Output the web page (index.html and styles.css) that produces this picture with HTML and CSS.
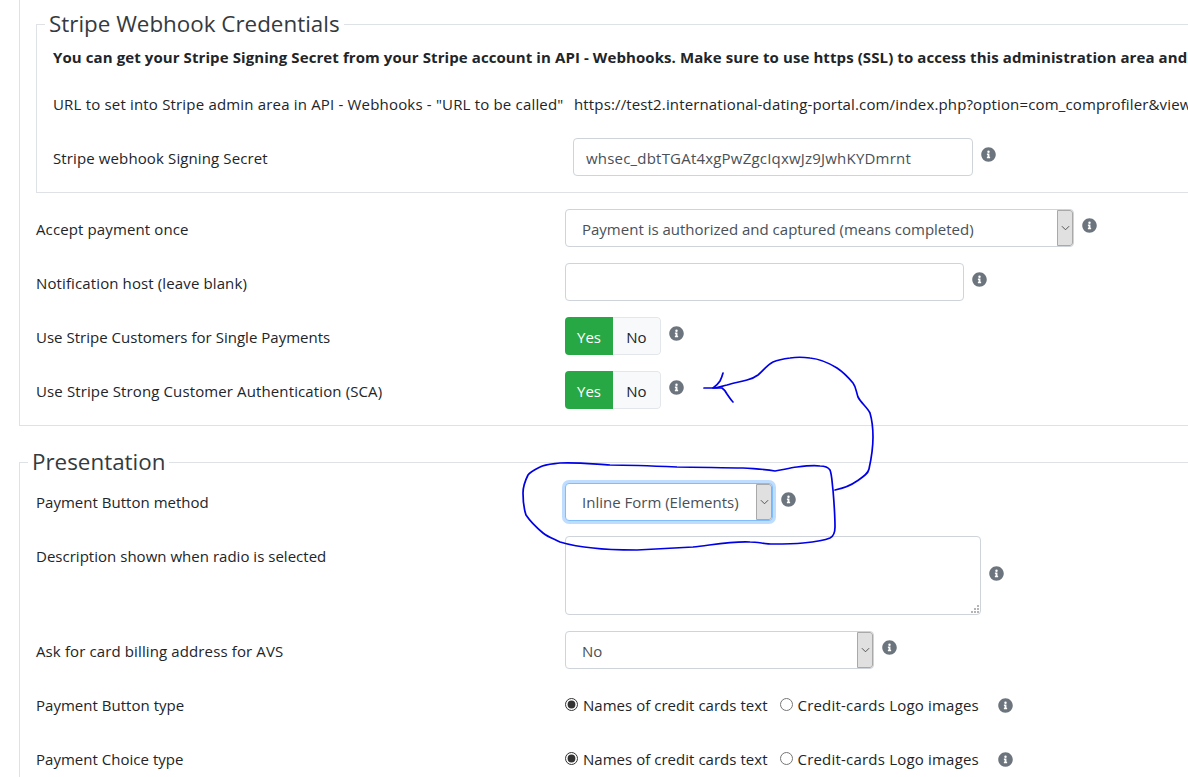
FILE: index.html
```html
<!DOCTYPE html>
<html lang="en">
<head>
<meta charset="utf-8">
<title>Stripe settings</title>
<link rel="stylesheet" href="styles.css">
</head>
<body>
<svg width="0" height="0" class="defs"><defs>
<symbol id="info" viewBox="0 0 512 512"><path d="M256 8C119 8 8 119 8 256s111 248 248 248 248-111 248-248S393 8 256 8zm0 110a42 42 0 1 1 0 84 42 42 0 0 1 0-84zm56 254c0 7-5 12-12 12h-88c-7 0-12-5-12-12v-24c0-7 5-12 12-12h12v-64h-12c-7 0-12-5-12-12v-24c0-7 5-12 12-12h64c7 0 12 5 12 12v100h12c7 0 12 5 12 12z"/></symbol>
<symbol id="chev" viewBox="0 0 10 6"><path d="M1 1l4 4 4-4" fill="none" stroke="#444" stroke-width="1"/></symbol>
</defs></svg>
<main class="page">
  <section class="outer first">
    <fieldset class="box inner">
      <legend>Stripe Webhook Credentials</legend>
      <p class="line bold">You can get your Stripe Signing Secret from your Stripe account in API - Webhooks. Make sure to use https (SSL) to access this administration area and</p>
      <p class="line url"><span class="urllabel">URL to set into Stripe admin area in API - Webhooks - "URL to be called"</span><span class="urlvalue">https://test2.international-dating-portal.com/index.php?option=com_comprofiler&amp;view=pluginclass</span></p>
      <div class="row inrow">
        <label class="lab lab-in wide">Stripe webhook Signing Secret</label>
        <input class="field w400 wide2" type="text" value="whsec_dbtTGAt4xgPwZgcIqxwJz9JwhKYDmrnt">
        <svg class="i"><use href="#info"/></svg>
      </div>
    </fieldset>
    <div class="row">
      <label class="lab wide">Accept payment once</label>
      <div class="sel w509"><span>Payment is authorized and captured (means completed)</span><b class="arr"><svg class="chev"><use href="#chev"/></svg></b></div>
      <svg class="i"><use href="#info"/></svg>
    </div>
    <div class="row">
      <label class="lab wide">Notification host (leave blank)</label>
      <input class="field w399" type="text">
      <svg class="i"><use href="#info"/></svg>
    </div>
    <div class="row">
      <label class="lab">Use Stripe Customers for Single Payments</label>
      <div class="tog"><span class="yes">Yes</span><span class="no">No</span></div>
      <svg class="i"><use href="#info"/></svg>
    </div>
    <div class="row">
      <label class="lab wide">Use Stripe Strong Customer Authentication (SCA)</label>
      <div class="tog"><span class="yes">Yes</span><span class="no">No</span></div>
      <svg class="i"><use href="#info"/></svg>
    </div>
  </section>
  <fieldset class="box outer second">
    <legend>Presentation</legend>
    <div class="row">
      <label class="lab flat">Payment Button method</label>
      <div class="sel w208 focus"><span>Inline Form (Elements)</span><b class="arr"><svg class="chev"><use href="#chev"/></svg></b></div>
      <svg class="i"><use href="#info"/></svg>
    </div>
    <div class="row tall">
      <label class="lab flat">Description shown when radio is selected</label>
      <div class="areawrap">
        <textarea class="area"></textarea>
        <svg class="grip" width="9" height="9" viewBox="0 0 9 9"><path d="M7 1h2v2H7zM4 4h2v2H4zM7 4h2v2H7zM1 7h2v2H1zM4 7h2v2H4zM7 7h2v2H7z"/></svg>
      </div>
      <svg class="i iarea"><use href="#info"/></svg>
    </div>
    <div class="row">
      <label class="lab wide">Ask for card billing address for AVS</label>
      <div class="sel w308"><span>No</span><b class="arr"><svg class="chev"><use href="#chev"/></svg></b></div>
      <svg class="i"><use href="#info"/></svg>
    </div>
    <div class="row">
      <label class="lab">Payment Button type</label>
      <div class="radios">
        <label class="opt"><input type="radio" name="bt" checked>Names of credit cards text</label>
        <label class="opt opt2"><input type="radio" name="bt">Credit-cards Logo images</label>
      </div>
      <svg class="i ir"><use href="#info"/></svg>
    </div>
    <div class="row">
      <label class="lab">Payment Choice type</label>
      <div class="radios">
        <label class="opt"><input type="radio" name="ct" checked>Names of credit cards text</label>
        <label class="opt opt2"><input type="radio" name="ct">Credit-cards Logo images</label>
      </div>
      <svg class="i ir"><use href="#info"/></svg>
    </div>
  </fieldset>
</main>
<svg class="ink" width="1188" height="777" viewBox="0 0 1188 777">
  <path d="M835 490C845 488 850 486 857 481C863 477 868 474 869 469C871 460 873 450 873 437C873 428 872 420 870 413C867 407 861 403 858 397C856 391 856 387 853 383C848 377 843 372 837 368C829 363 820 359 810 358C803 357 796 357 790 358C783 359 778 360 773 362C767 365 763 371 758 375C754 378 751 379 747 380C740 382 733 383 727 385C722 386 718 388 713 388L704 388"/>
  <path d="M723 373C722 377 721 379 720 381C718 384 716 386 713 388C717 388 720 388 722 388C725 390 726 392 727 394C729 397 731 400 733 402"/>
  <path d="M775 471C765 469 755 469 743 468C722 468 700 467 677 467C655 466 632 465 610 465C593 464 575 462 560 463C552 464 545 464 540 467C534 470 530 472 528 475C525 481 523 487 523 493C523 501 524 509 526 515C530 521 537 528 543 533C548 537 554 539 560 542C570 545 581 547 593 548C608 550 622 550 637 550C656 549 674 548 693 547C712 545 732 541 750 542C758 542 765 544 773 544C783 544 793 544 803 543C813 542 823 541 830 538C834 536 835 531 835 527C835 515 834 502 833 490C832 483 832 475 830 470C828 467 824 466 820 466C813 465 805 466 797 467C789 468 782 470 775 471"/>
</svg>
</body>
</html>
```
FILE: styles.css
```css
* { box-sizing: border-box; }
html, body { margin: 0; padding: 0; height: 777px; overflow: hidden; background: #fff; }
body {
  position: relative;
  width: 1188px;
  font-family: "Open Sans", "Noto Sans", "Liberation Sans", sans-serif;
  font-size: 15px;
  color: #212529;
}
.defs { position: absolute; }
.page { width: 1600px; padding-left: 19px; }

.box { border: 1px solid #dee2e6; margin: 0; min-width: 0; }
.box > legend {
  width: auto;
  font-size: 22.4px;
  line-height: 28px;
  padding: 0 4px;
  margin-left: -8px;
  color: #343a40;
  font-weight: 400;
}

.outer.first {
  height: 427px;
  margin-top: -1px;
  padding: 11px 0 0 16px;
  border-left: 1px solid #dee2e6;
  border-bottom: 1px solid #dee2e6;
}
.inner { padding: 0 16px 15px; height: 183px; margin-bottom: 16px; }
.second { margin-top: 22px; padding: 0 0 0 16px; }

.line { margin: 0; height: 20px; line-height: 20px; white-space: nowrap; }
.bold { font-weight: 700; margin-top: 9px; letter-spacing: .09px; }
.url { margin-top: 27px; }
.urllabel { display: inline-block; width: 521px; letter-spacing: .18px; }
.urlvalue { letter-spacing: .14px; }

.row { display: flex; align-items: flex-start; height: 38px; margin-bottom: 16px; }
.inrow { margin: 24px 0 0; }
.tall { height: 79px; margin-bottom: 15px; }
.lab { width: 529px; flex: none; padding-top: 1px; line-height: 38px; white-space: nowrap; letter-spacing: .02px; }
.flat { padding-top: 0; }
.wide { letter-spacing: .12px; }
.lab-in { width: 520px; }
.second .row:first-of-type { margin-top: 7px; }

.field, .sel, .area {
  height: 38px;
  border: 1px solid #ced4da;
  border-radius: 4px;
  background: #fff;
  font: inherit;
  color: #495057;
  flex: none;
}
.field { padding: 2px 12px 0; }
.wide2 { letter-spacing: .2px; }
.w400 { width: 400px; }
.w399 { width: 399px; }
.w509 { width: 509px; }
.w208 { width: 208px; }
.w308 { width: 309px; }
.areawrap { position: relative; flex: none; width: 416px; height: 79px; margin-top: -1px; }
.area { width: 100%; height: 100%; display: block; margin: 0; padding: 6px 12px; resize: none; }
.grip { position: absolute; right: 2px; bottom: 2px; fill: #b5b5b5; }

.sel { display: flex; align-items: stretch; overflow: hidden; line-height: 38px; }
.focus { line-height: 36px; }
.sel > span { flex: 1; padding-left: 16px; white-space: nowrap; }
.arr {
  width: 16px;
  flex: none;
  background: #e0e0e0;
  border: 1px solid #a9a9a9;
  border-radius: 0 3px 3px 0;
  display: flex;
  align-items: center;
  justify-content: center;
}
.chev { width: 9px; height: 6px; }
.focus { border-color: #80bdff; box-shadow: 0 0 0 3px rgba(0, 123, 255, .25); }

.tog { display: flex; height: 38px; width: 96px; flex: none; border-radius: 4px; overflow: hidden; line-height: 40px; text-align: center; }
.yes { width: 48px; background: #28a745; color: #fff; }
.no { width: 48px; background: #f8f9fa; border: 1px solid #e3e6ea; border-left: 0; border-radius: 0 4px 4px 0; line-height: 38px; }

.i { width: 15px; height: 15px; fill: #6c757d; flex: none; margin: 9px 0 0 8px; }
.iarea { margin-top: 29px; }
.ir { margin: 13px 0 0 19px; }

.radios { display: flex; gap: 12px; flex: none; margin-top: 1px; line-height: 38px; letter-spacing: .03px; }
.opt { display: flex; align-items: center; white-space: nowrap; }
.opt2 { letter-spacing: .2px; }
.opt input { margin: 0 5px 2px 0; width: 13px; height: 13px; accent-color: #333; }

.ink { position: absolute; left: 0; top: 0; pointer-events: none; }
.ink path { fill: none; stroke: #0000e6; stroke-width: 1.7; stroke-linecap: round; stroke-linejoin: round; }
```
